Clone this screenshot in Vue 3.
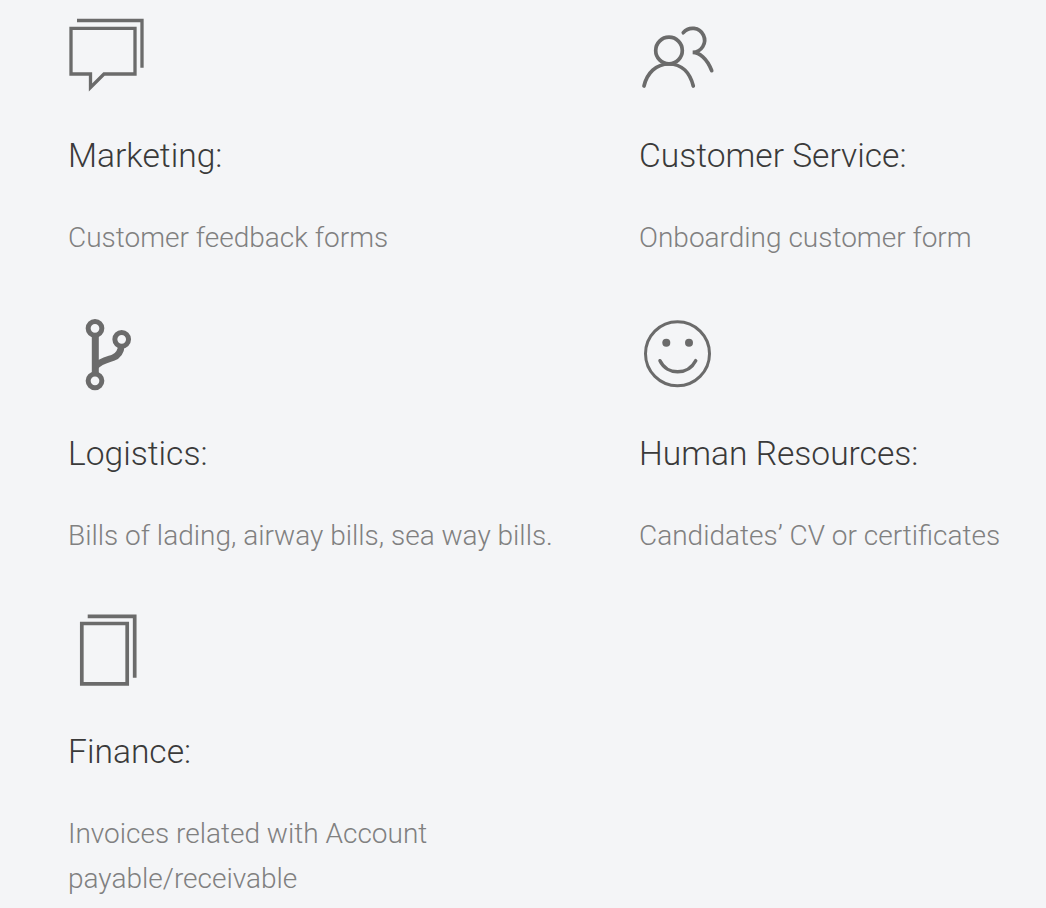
<script setup>
const items = [
  { id: 'chat', title: 'Marketing:', lines: ['Customer feedback forms'] },
  { id: 'users', title: 'Customer Service:', lines: ['Onboarding customer form'] },
  { id: 'branch', title: 'Logistics:', lines: ['Bills of lading, airway bills, sea way bills.'] },
  { id: 'smile', title: 'Human Resources:', lines: ['Candidates’ CV or certificates'] },
  { id: 'docs', title: 'Finance:', lines: ['Invoices related with Account', 'payable/receivable'] },
]
</script>

<template>
  <main class="page">
    <section v-for="item in items" :key="item.id" class="item">
      <svg class="icon" viewBox="0 0 90 100" fill="none" stroke="#6b6b6b">
        <g v-if="item.id === 'chat'" stroke-width="3.300">
          <path d="M9 20.500H74V67.700" />
          <path d="M3 28.400H67V74H36L22.500 87.500V74H3Z" />
        </g>
        <g v-else-if="item.id === 'users'" stroke-width="3.700" stroke-linecap="round">
          <circle cx="30" cy="50.500" r="13.300" />
          <path d="M5 86C8 73 17 64 30 64S51 73 54.300 86" />
          <path d="M44.300 32.700A12 12 0 1 1 53.700 52.300C60 52.500 68 58 72.700 70.700" />
        </g>
        <g v-else-if="item.id === 'branch'">
          <circle cx="27" cy="30.300" r="6.850" stroke-width="5" />
          <circle cx="27" cy="82.800" r="6.850" stroke-width="5" />
          <circle cx="53.700" cy="41.300" r="6.850" stroke-width="5" />
          <path d="M27.300 36V77" stroke-width="7" />
          <path d="M27 69C33 62 40 61.500 45 59.700C50 58 53 54 53.500 47" stroke-width="6.500" />
        </g>
        <g v-else-if="item.id === 'smile'" stroke-width="3">
          <circle cx="38.500" cy="55.800" r="32" />
          <path d="M21 62.700C28 77.400 49 77.400 56.700 62.700" stroke-width="3.500" stroke-linecap="round" />
          <circle cx="27.300" cy="44.700" r="4" fill="#6b6b6b" stroke="none" />
          <circle cx="50" cy="44.700" r="4" fill="#6b6b6b" stroke="none" />
        </g>
        <g v-else stroke-width="3.700">
          <path d="M19.700 20.300H66.700V81.700" />
          <path d="M13.800 27.500H59.200V87.900H13.800Z" />
        </g>
      </svg>
      <h3 class="title">{{ item.title }}</h3>
      <p class="desc"><span v-for="line in item.lines" :key="line" class="line">{{ line }}</span></p>
    </section>
  </main>
</template>

<style>
html, body { margin: 0; background: #f4f5f7; }
</style>

<style scoped>
.page {
  display: grid;
  grid-template-columns: 571px 1fr;
  grid-auto-rows: 298px;
  padding-left: 68px;
  height: 908px;
  box-sizing: border-box;
  overflow: hidden;
  font-family: Roboto, "Liberation Sans", sans-serif;
  font-weight: 300;
}
.item { min-width: 0; }
.icon { display: block; width: 90px; height: 100px; margin-bottom: 32px; }
.title { margin: 0; font-size: 33.600px; line-height: 48px; font-weight: 300; color: #3a3a3a; }
.desc { margin: 35px 0 0; font-size: 28px; line-height: 45px; color: #808080; }
.line { display: block; white-space: nowrap; }
</style>
